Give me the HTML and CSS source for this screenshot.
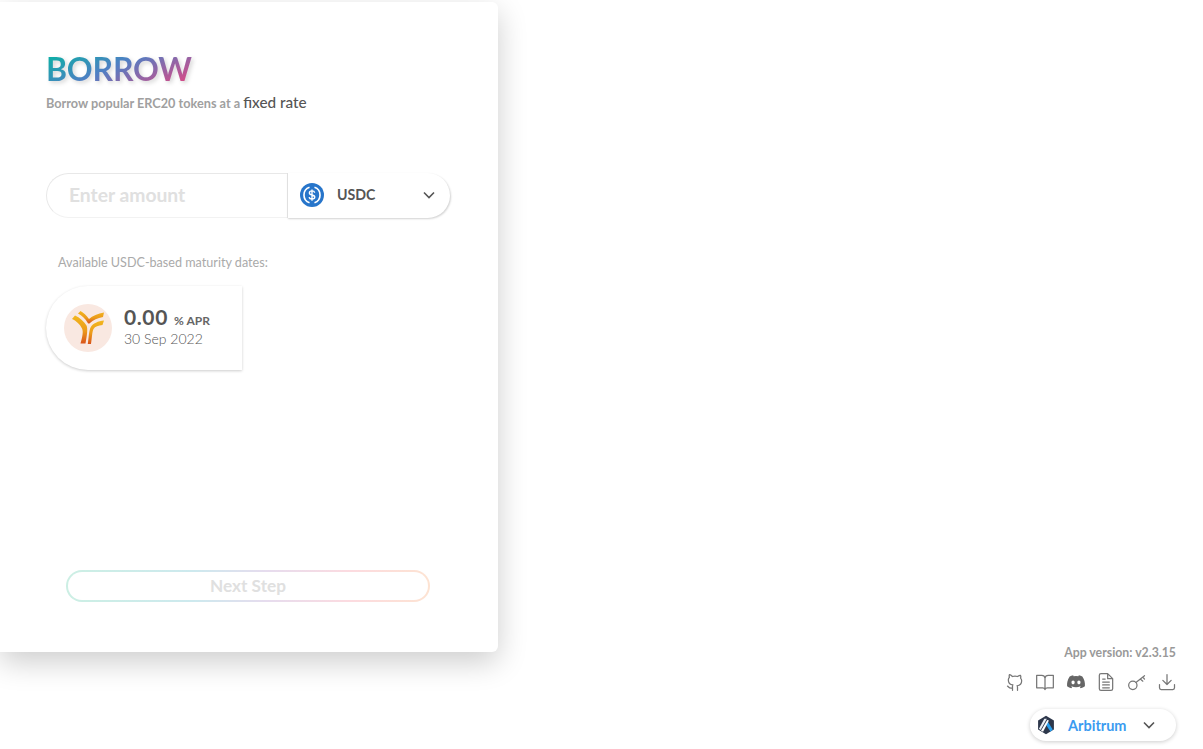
FILE: index.html
```html
<!DOCTYPE html>
<html lang="en">
<head>
<meta charset="utf-8">
<title>Borrow</title>
<link rel="stylesheet" href="styles.css">
</head>
<body>
<div class="page">
  <main class="card">
    <header class="head">
      <h1 class="title">BORROW</h1>
      <p class="subtitle">Borrow popular ERC20 tokens at a <span class="subtitle-em">fixed rate</span></p>
    </header>
    <div class="amount-row">
      <div class="amount-input">Enter amount</div>
      <div class="token-select">
        <svg class="token-icon" viewBox="0 0 32 32" width="24" height="24">
          <circle cx="16" cy="16" r="16" fill="#2775ca"/>
          <path d="M12.7 5.600a11 11 0 0 0 0 20.800M19.300 5.600a11 11 0 0 1 0 20.800" fill="none" stroke="#fff" stroke-width="2.200"/>
          <path d="M19.600 13c-.3-1.700-1.700-2.500-3.600-2.500-2.100 0-3.500 1-3.500 2.700 0 3.800 7.200 1.800 7.200 5.600 0 1.700-1.600 2.700-3.700 2.700-2 0-3.500-.9-3.800-2.600M16 8.500v15" fill="none" stroke="#fff" stroke-width="1.800"/>
        </svg>
        <span class="token-name">USDC</span>
        <svg class="chev" viewBox="0 0 12 8" width="12" height="8"><path d="M1 1.500l5 5 5-5" fill="none" stroke="#555" stroke-width="1.600"/></svg>
      </div>
    </div>
    <p class="avail">Available USDC-based maturity dates:</p>
    <div class="maturity">
      <div class="maturity-logo">
        <svg viewBox="0 0 36 36" width="36" height="36">
          <defs>
            <linearGradient id="yg" x1="0" y1="0" x2="0" y2="1">
              <stop offset="0" stop-color="#f2b71e"/>
              <stop offset=".55" stop-color="#eb9a1a"/>
              <stop offset="1" stop-color="#d9531a"/>
            </linearGradient>
          </defs>
          <path fill="url(#yg)" d="M2 9l3-3.500c4.500 2 9 6 11.500 10 1.500 3 .5 10-1 18h-5c2-7 3-12 1.500-15C10.500 15 6.500 11 2 9z"/>
          <path fill="url(#yg)" d="M8 3.500L10.500 1c3 1.500 6 4.500 8.500 8 3.500-3 9-5.500 15-6.500l-1 4.500c-5.500 1-10 3-13 6-.8.700-1.500.700-2.200 0C15.500 9 12 5.500 8 3.500z"/>
          <path fill="url(#yg)" d="M34 10.500l-1.500 4.500c-4 .3-7.500 1.500-9 4-1.500 3-1.500 9-2.500 15h-3.200c1-6.500 1-13 3-17 2-3.500 7.500-6 13.200-6.500z"/>
        </svg>
      </div>
      <div class="maturity-info">
        <div class="apr"><span class="apr-num">0.00</span> <span class="apr-unit">% APR</span></div>
        <div class="date">30 Sep 2022</div>
      </div>
    </div>
    <div class="spacer"></div>
    <button class="next" type="button">Next Step</button>
  </main>
  <aside class="side">
    <div class="version">App version: v2.3.15</div>
    <div class="links">
      <svg viewBox="0 0 24 24" width="20" height="20"><path d="M9 19c-4 1.500-4.500-1.500-6-2m12 5v-3.500c0-1 .1-1.400-.5-2 2.800-.3 5.500-1.400 5.500-6a4.600 4.600 0 0 0-1.300-3.200 4.200 4.200 0 0 0-.1-3.200s-1.100-.3-3.500 1.300a12 12 0 0 0-6.200 0C6.500 2.800 5.400 3.100 5.400 3.100a4.200 4.200 0 0 0-.1 3.200A4.600 4.600 0 0 0 4 9.500c0 4.600 2.700 5.700 5.500 6-.6.6-.6 1.200-.5 2V22"/></svg>
      <svg viewBox="0 0 24 24" width="20" height="20"><path d="M2 4h6a4 4 0 0 1 4 3.500A4 4 0 0 1 16 4h6v15h-7a3 3 0 0 0-3 2 3 3 0 0 0-3-2H2zM12 7.500V21"/></svg>
      <svg viewBox="0 0 24 24" width="20" height="20"><path class="fill" d="M19.600 5.300A17 17 0 0 0 15.400 4l-.5 1.100a16 16 0 0 0-5.800 0L8.600 4a17 17 0 0 0-4.200 1.300C1.700 9.300 1 13.200 1.300 17a17 17 0 0 0 5.200 2.600l1.100-1.800-1.700-.8.4-.3a12 12 0 0 0 11.400 0l.4.300-1.700.8 1.100 1.800a17 17 0 0 0 5.200-2.600c.4-4.400-.7-8.300-3.100-11.700zM8.500 14.700c-1.100 0-1.900-1-1.900-2.200s.8-2.200 1.900-2.200 2 1 1.900 2.200c0 1.200-.8 2.200-1.900 2.200zm7 0c-1.100 0-1.900-1-1.900-2.200s.8-2.200 1.900-2.200 2 1 1.900 2.200c0 1.200-.8 2.200-1.900 2.200z"/></svg>
      <svg viewBox="0 0 24 24" width="20" height="20"><path d="M14 2H6a2 2 0 0 0-2 2v16a2 2 0 0 0 2 2h12a2 2 0 0 0 2-2V8zM14 2v6h6M8 12h8M8 15.500h8M8 19h8M8 8.500h3"/></svg>
      <svg viewBox="0 0 24 24" width="20" height="20"><circle cx="7" cy="16" r="5"/><path d="M10.700 12.500L21 4.500M16 8.500l3 2.500M19 6l2 2.500"/></svg>
      <svg viewBox="0 0 24 24" width="20" height="20"><path d="M3 15v4a2 2 0 0 0 2 2h14a2 2 0 0 0 2-2v-4M7 10l5 5 5-5M12 15V3"/></svg>
    </div>
    <div class="network">
      <svg viewBox="0 0 24 24" width="20" height="20">
        <path d="M12 1l9.500 5.500v11L12 23l-9.500-5.500v-11z" fill="#2d374b"/>
        <path d="M13.500 7l6.500 10.500-2.500 2.500-6-9z" fill="#28a0f0"/>
        <path d="M10 4.500h3L5.500 18l-2-1.500z" fill="#e8eef5"/>
        <path d="M13.500 6l2 .5L8.500 20l-2.500-1z" fill="#fff"/>
      </svg>
      <span class="network-name">Arbitrum</span>
      <svg class="chev" viewBox="0 0 12 8" width="12" height="8"><path d="M1 1.500l5 5 5-5" fill="none" stroke="#555" stroke-width="1.600"/></svg>
    </div>
  </aside>
</div>
</body>
</html>
```

FILE: styles.css
```css
* { box-sizing: border-box; }
html, body { margin: 0; height: 100%; background: #fff; overflow: hidden; }
body { font-family: "Lato", "Open Sans", sans-serif; color: #555; }
.page { display: flex; justify-content: space-between; align-items: flex-start; height: 749px; }

.card {
  width: 498px;
  height: 650px;
  margin-top: 2px;
  padding: 48px 48px 50px 46px;
  display: flex;
  flex-direction: column;
  background: #fff;
  border-radius: 0 6px 6px 0;
  box-shadow: 0 10px 30px rgba(0,0,0,.2);
}
.title {
  margin: 0;
  width: max-content;
  font-size: 32px;
  line-height: 38px;
  font-weight: 700;
  letter-spacing: -.2px;
  color: transparent;
  background: linear-gradient(155deg, #00b8a0 0%, #4f7fc4 45%, #f0407c 100%);
  -webkit-background-clip: text;
  background-clip: text;
  filter: drop-shadow(2px 2px 2px rgba(0,0,0,.16));
}
.subtitle { margin: 5px 0 0; font-size: 12.700px; line-height: 18px; font-weight: 700; color: #a0a0a0; }
.subtitle-em { font-size: 15.300px; font-weight: 500; color: #555; }

.amount-row { display: flex; width: 404px; height: 45px; margin-top: 61px; }
.amount-input {
  width: 241px;
  padding: 0 0 2px 22px;
  display: flex;
  align-items: center;
  font-size: 19.300px;
  font-weight: 700;
  color: #e0e0e0;
  border: 1px solid #e8e8e8;
  border-right: 0;
  border-bottom-color: #f2f2f2;
  border-radius: 23px 0 0 23px;
}
.token-select {
  flex: 1;
  display: flex;
  align-items: center;
  padding: 0 15px 2px 12px;
  border-left: 1px solid #e0e0e0;
  border-radius: 0 23px 23px 0;
  box-shadow: 1px 1px 2px rgba(0,0,0,.18);
}
.token-name { margin-left: 13px; flex: 1; font-size: 14.200px; font-weight: 700; color: #555; }

.avail { margin: 37px 0 0 12px; font-size: 12.600px; line-height: 16px; color: #aaa; font-weight: 400; }

.maturity {
  display: flex;
  align-items: center;
  width: 196px;
  height: 84px;
  margin-top: 15px;
  padding-left: 18px;
  border-radius: 42px 0 0 42px;
  box-shadow: 0 1px 3px rgba(0,0,0,.2);
}
.maturity-logo {
  width: 48px;
  height: 48px;
  display: flex;
  align-items: center;
  justify-content: center;
  border-radius: 50%;
  background: #f9e8e1;
}
.maturity-info { margin-left: 12px; }
.apr { height: 20px; line-height: 20px; white-space: nowrap; }
.apr-num { font-size: 21px; font-weight: 700; color: #555; letter-spacing: .6px; }
.apr-unit { margin-left: 2px; font-size: 12px; font-weight: 700; color: #666; }
.date { margin-top: 2px; font-size: 14px; line-height: 20px; font-weight: 300; color: #555; }

.spacer { flex: 1; }
.next {
  align-self: flex-start;
  width: 364px;
  height: 32px;
  margin-left: 20px;
  padding: 0 0 2px;
  font-family: inherit;
  font-size: 17.200px;
  font-weight: 700;
  color: #e0e0e0;
  border: 2px solid transparent;
  border-radius: 16px;
  background:
    linear-gradient(#fff, #fff) padding-box,
    linear-gradient(90deg, #ccefe4 0%, #cde9ee 35%, #e6dcee 55%, #fcdbe0 78%, #fde3d2 100%) border-box;
}

.side {
  align-self: flex-end;
  display: flex;
  flex-direction: column;
  align-items: flex-end;
  padding: 0 27px 8px 0;
}
.version { font-size: 12.300px; line-height: 14px; font-weight: 700; color: #999; margin-bottom: 1px; }
.links { display: flex; align-items: center; gap: 10.500px; margin: 11px -1px 0 0; }
.links svg { display: block; fill: none; stroke: #777; stroke-width: 1.500; stroke-linecap: round; stroke-linejoin: round; }
.links svg .fill { fill: #666; stroke: none; }
.network {
  display: flex;
  align-items: center;
  width: 146px;
  height: 32px;
  margin-top: 17px;
  padding: 0 21px 0 6px;
  border-radius: 16px;
  box-shadow: 0 1px 4px rgba(0,0,0,.2);
}
.network-name { margin-left: 12px; flex: 1; font-size: 14.500px; font-weight: 700; color: #3b9bf0; }
```
